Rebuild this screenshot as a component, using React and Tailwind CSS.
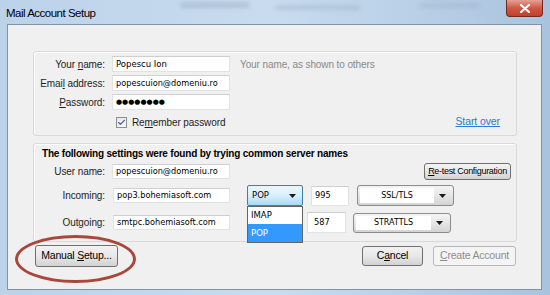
import { Check } from "lucide-react";

const Arrow = ({ className }) => (
  <svg width="7" height="4" viewBox="0 0 7 4" className={className}>
    <path d="M0 0h7L3.5 4z" fill="#1a1a1a" />
  </svg>
);

const TextBox = ({ value, className }) => (
  <div
    className={`flex items-center whitespace-nowrap bg-white border border-[#e2e2e2] border-t-[#cfcfcf] pl-[3px] font-['DejaVu_Sans',Verdana,sans-serif] tracking-normal text-black ${className}`}
  >
    {value}
  </div>
);

const Combo = ({ label, className }) => (
  <div
    className={`flex rounded-[3px] border border-[#8c8c8c] bg-gradient-to-b from-[#f4f4f4] via-[#e6e6e6] to-[#d4d4d4] p-[2px] ${className}`}
  >
    <div className="flex-1 flex items-center justify-center bg-white font-['DejaVu_Sans',Verdana,sans-serif] text-[8px] tracking-normal text-black">
      {label}
    </div>
    <div className="w-[17px] flex items-center justify-center">
      <Arrow />
    </div>
  </div>
);

const Button = ({ children, className }) => (
  <button
    className={`flex items-center justify-center whitespace-nowrap rounded-[3px] border border-[#707070] bg-gradient-to-b from-[#f2f2f2] via-[#e8e8e8] to-[#d2d2d2] text-black ${className}`}
  >
    {children}
  </button>
);

export default function App() {
  return (
    <div className="relative w-[550px] h-[295px] overflow-hidden bg-gradient-to-r from-[#bcd2e9] via-[#c9dcef] to-[#a9c3de] font-['Liberation_Sans',Arial,sans-serif] text-[10px] tracking-[-0.1px] text-[#1e1e1e] whitespace-nowrap">
      {/* blurred window behind the glass title bar */}
      <div className="absolute left-[180px] top-[2px] w-[70px] h-[6px] rounded-full bg-[#8fa4ba] opacity-40 blur-[2px]" />
      <div className="absolute left-[275px] top-[5px] w-[85px] h-[5px] rounded-full bg-[#8fa4ba] opacity-35 blur-[2px]" />
      <div className="absolute left-[420px] top-[3px] w-[60px] h-[5px] rounded-full bg-[#8fa4ba] opacity-30 blur-[2px]" />

      {/* title bar */}
      <div className="relative h-[24px] flex items-start justify-between">
        <span className="pl-[6px] pt-[5px] text-[11.5px] tracking-[-0.5px] text-black">Mail Account Setup</span>
        <button className="mr-[7px] w-[37px] h-[17px] rounded-b-[4px] border border-t-0 border-[#6f2b22] bg-gradient-to-b from-[#e3a194] via-[#cf5745] to-[#c0402d] flex items-center justify-center">
          <svg width="10" height="9" viewBox="0 0 10 9">
            <path d="M1 1l8 7M9 1L1 8" stroke="#fff" strokeWidth="2.2" strokeLinecap="round" />
          </svg>
        </button>
      </div>

      {/* client area */}
      <div className="relative ml-[7px] mr-[8px] h-[266px] border border-[#7f93a8] bg-[#f0f0f0] flex flex-col">
        {/* account group */}
        <div className="mt-[26px] ml-[25px] w-[484px] h-[85px] rounded-[3px] border border-[#d9d9d9] shadow-[inset_1px_1px_0_#fff] flex flex-col">
          <div className="mt-[4px] h-[16px] flex items-center">
            <span className="w-[71px] text-right">
              Your <u>n</u>ame:
            </span>
            <TextBox value="Popescu Ion" className="ml-[7px] w-[118px] h-[16px] text-[8.5px] tracking-[0.6px]" />
            <span className="ml-[10px] text-[#8a8a8a]">Your name, as shown to others</span>
          </div>
          <div className="mt-[3px] h-[16px] flex items-center">
            <span className="w-[71px] text-right">
              Emai<u>l</u> address:
            </span>
            <TextBox value="popescuion@domeniu.ro" className="ml-[7px] w-[118px] h-[16px] text-[8.2px]" />
          </div>
          <div className="mt-[3px] h-[16px] flex items-center">
            <span className="w-[71px] text-right">
              <u>P</u>assword:
            </span>
            <TextBox value="●●●●●●●●" className="ml-[7px] w-[118px] h-[16px] text-[7px] tracking-[0.6px]" />
          </div>
          <div className="mt-[5px] h-[14px] flex items-center pl-[82px] pr-[16px]">
            <span className="w-[11px] h-[11px] border border-[#8e8f8f] bg-gradient-to-br from-[#e6e6e6] to-[#fbfbfb] flex items-center justify-center">
              <Check size={9} strokeWidth={3} className="text-[#4a5f97]" />
            </span>
            <span className="ml-[5px]">
              Re<u>m</u>ember password
            </span>
            <a className="ml-auto text-[10.5px] text-[#2b79d0] underline">Start over</a>
          </div>
        </div>

        {/* server group */}
        <div className="mt-[7px] ml-[25px] w-[484px] h-[99px] rounded-[3px] border border-[#d9d9d9] shadow-[inset_1px_1px_0_#fff] flex flex-col">
          <div className="h-[16px] pl-[8px] pt-[2px] font-bold text-[10px] tracking-[-0.2px] text-black">
            The following settings were found by trying common server names
          </div>
          <div className="mt-[3px] h-[17px] flex items-center pr-[5px]">
            <span className="w-[71px] text-right">User name:</span>
            <TextBox value="popescuion@domeniu.ro" className="ml-[7px] w-[118px] h-[15px] text-[8.2px]" />
            <Button className="ml-auto w-[87px] h-[17px] text-[9px] tracking-[-0.3px] border-[#8a8a8a]">
              <span>
                <u>R</u>e-test Configuration
              </span>
            </Button>
          </div>
          <div className="mt-[5px] h-[21px] flex items-center">
            <span className="w-[71px] text-right">Incoming:</span>
            <TextBox value="pop3.bohemiasoft.com" className="ml-[8px] w-[117px] h-[15px] text-[8.2px]" />
            <div className="relative ml-[17px] w-[56px] h-[21px]">
              <div className="h-full flex items-center justify-between pl-[4px] pr-[6px] rounded-[2px] border border-[#3c7fb1] bg-gradient-to-b from-[#eaf6fd] via-[#d9f0fc] to-[#a7d9f5] font-['DejaVu_Sans',Verdana,sans-serif] text-[8.5px] tracking-normal text-black">
                POP
                <Arrow />
              </div>
              <div className="absolute left-0 top-full w-[56px] border border-[#646464] bg-white font-['DejaVu_Sans',Verdana,sans-serif] text-[8.5px] tracking-normal">
                <div className="h-[17px] flex items-center pl-[3px] text-black">IMAP</div>
                <div className="h-[18px] flex items-center pl-[3px] bg-[#3399ff] text-white">POP</div>
              </div>
            </div>
            <TextBox value="995" className="ml-[8px] w-[38px] h-[20px] text-[8.2px]" />
            <Combo label="SSL/TLS" className="ml-[8px] w-[97px] h-[21px]" />
          </div>
          <div className="mt-[6px] h-[21px] flex items-center">
            <span className="w-[71px] text-right">Outgoing:</span>
            <TextBox value="smtpc.bohemiasoft.com" className="ml-[8px] w-[117px] h-[15px] text-[8.2px]" />
            <TextBox value="587" className="ml-[77px] w-[39px] h-[21px] pl-[6px] text-[8.2px]" />
            <Combo label="STRATTLS" className="ml-[7px] w-[98px] h-[20px]" />
          </div>
        </div>

        {/* buttons */}
        <div className="mt-[3px] h-[22px] flex items-center pl-[27px] pr-[25px]">
          <Button className="w-[83px] h-[22px] text-[10.5px] tracking-[-0.2px]">
            <span>
              Manual <u>S</u>etup...
            </span>
          </Button>
          <Button className="ml-auto w-[61px] h-[20px] text-[10.5px] tracking-[-0.2px]">
            <span>
              C<u>a</u>ncel
            </span>
          </Button>
          <button className="ml-[10px] w-[83px] h-[20px] rounded-[3px] border border-[#b5b9bc] bg-[#f4f4f4] text-[10.5px] tracking-[-0.2px] text-[#8d8d8d]">
            <u>C</u>reate Account
          </button>
        </div>
      </div>

      {/* red annotation ellipse */}
      <div className="absolute left-[15px] top-[235px] w-[121px] h-[48px] rounded-[50%] border-[3px] border-[#a9473c]" />
    </div>
  );
}
